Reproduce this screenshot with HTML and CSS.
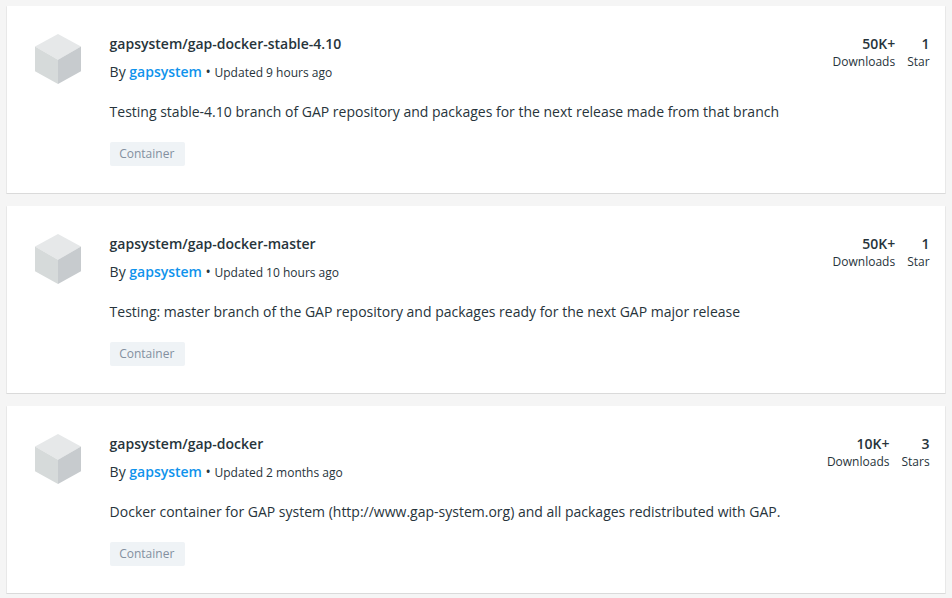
FILE: index.html
```html
<!DOCTYPE html>
<html lang="en">
<head>
<meta charset="utf-8">
<title>gapsystem repositories</title>
<link rel="stylesheet" href="styles.css">
</head>
<body>
<svg class="defs" width="0" height="0" aria-hidden="true">
  <symbol id="cube" viewBox="0 0 46 50">
    <path fill="#e6e8e9" d="M23 0 46 12.500 23 25.800 0 12.500z"/>
    <path fill="#d6dada" d="M0 12.500 23 25.800V50L0 37.200z"/>
    <path fill="#c7cbce" d="M46 12.500 23 25.800V50L46 37.200z"/>
  </symbol>
</svg>
<main class="results">
  <article class="card">
    <svg class="logo"><use href="#cube"/></svg>
    <div class="details">
      <h2 class="name">gapsystem/gap-docker-stable-4.10</h2>
      <p class="byline">By <a class="publisher">gapsystem</a> • <span class="updated">Updated 9 hours ago</span></p>
      <p class="description">Testing stable-4.10 branch of GAP repository and packages for the next release made from that branch</p>
      <span class="tag">Container</span>
    </div>
    <div class="stats">
      <div class="stat"><b>50K+</b><span>Downloads</span></div>
      <div class="stat"><b>1</b><span>Star</span></div>
    </div>
  </article>
  <article class="card">
    <svg class="logo"><use href="#cube"/></svg>
    <div class="details">
      <h2 class="name">gapsystem/gap-docker-master</h2>
      <p class="byline">By <a class="publisher">gapsystem</a> • <span class="updated">Updated 10 hours ago</span></p>
      <p class="description">Testing: master branch of the GAP repository and packages ready for the next GAP major release</p>
      <span class="tag">Container</span>
    </div>
    <div class="stats">
      <div class="stat"><b>50K+</b><span>Downloads</span></div>
      <div class="stat"><b>1</b><span>Star</span></div>
    </div>
  </article>
  <article class="card">
    <svg class="logo"><use href="#cube"/></svg>
    <div class="details">
      <h2 class="name">gapsystem/gap-docker</h2>
      <p class="byline">By <a class="publisher">gapsystem</a> • <span class="updated">Updated 2 months ago</span></p>
      <p class="description">Docker container for GAP system (http://www.gap-system.org) and all packages redistributed with GAP.</p>
      <span class="tag">Container</span>
    </div>
    <div class="stats">
      <div class="stat"><b>10K+</b><span>Downloads</span></div>
      <div class="stat"><b>3</b><span>Stars</span></div>
    </div>
  </article>
</main>
</body>
</html>
```
FILE: styles.css
```css
* { box-sizing: border-box; }
body {
  margin: 0;
  background: #f5f5f5;
  color: #27343b;
  font-family: "Open Sans", sans-serif;
  font-size: 14px;
  line-height: 20px;
  overflow: hidden;
}
.defs { position: absolute; }
.results {
  display: flex;
  flex-direction: column;
  gap: 12px;
  padding: 6px 6px 4px;
}
.card {
  display: flex;
  align-items: flex-start;
  height: 188px;
  padding: 28px 15.4px 0 29px;
  background: #fff;
  border: 1px solid #e8e8e8;
  border-top: 0;
  border-bottom-color: #dadada;
  border-radius: 1px;
}
.logo {
  flex: none;
  width: 46px;
  height: 50px;
  margin: 0 28.6px 0 -1px;
}
.details { flex: 1; }
.name {
  margin: 0 0 8px;
  font-size: 14px;
  font-weight: 600;
  line-height: 20px;
}
.byline { margin: 0 0 19px; }
.publisher {
  color: #0f93ec;
  font-weight: 600;
}
.updated { font-size: 12px; }
.description {
  margin: 0 0 20px;
}
.tag {
  display: block;
  width: 75px;
  height: 24px;
  padding-left: 9.6px;
  background: #eff3f6;
  border-radius: 2px;
  color: #8390a0;
  font-size: 12px;
  line-height: 24px;
}
.stats {
  display: flex;
  gap: 12px;
  text-align: right;
}
.stat b {
  display: block;
  font-weight: 600;
}
.stat span {
  display: block;
  font-size: 12px;
  line-height: 16px;
}
```
